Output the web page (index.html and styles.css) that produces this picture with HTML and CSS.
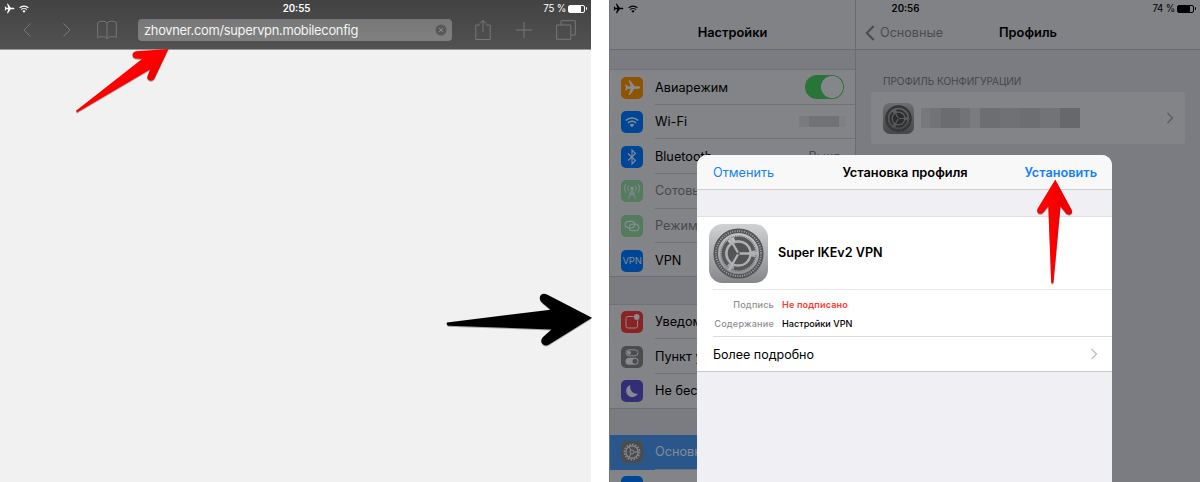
FILE: index.html
```
<!DOCTYPE html>
<html lang="ru">
<head>
<meta charset="utf-8">
<title>Установка профиля</title>
<link rel="stylesheet" href="styles.css">
</head>
<body>
<svg class="defs" width="0" height="0">
  <defs>
    <linearGradient id="metal" x1="0" y1="0" x2="0" y2="1"><stop offset="0" stop-color="#d0d2d4"/><stop offset="1" stop-color="#85878b"/></linearGradient>
    <linearGradient id="red" x1="0" y1="0" x2="1" y2="0"><stop offset=".45" stop-color="#ff0000"/><stop offset=".65" stop-color="#ee0000"/></linearGradient>
    <linearGradient id="redTilt" x1="0" y1="0" x2="1" y2="1"><stop offset=".5" stop-color="#ff0000"/><stop offset=".6" stop-color="#ee0000"/></linearGradient>
    <symbol id="plane" viewBox="0 0 20 20"><path d="M19 10c0-.9-1-1.400-2.500-1.400H12.300L7.200 1.500H5.400L7.800 8.600H4.300L2.600 6.400H1.200L2.200 10 1.200 13.600H2.600L4.300 11.400H7.800L5.400 18.500H7.200L12.300 11.400H16.500C18 11.400 19 10.900 19 10Z" fill="currentColor"/></symbol>
    <symbol id="wifi" viewBox="0 0 20 16"><g fill="none" stroke="currentColor" stroke-width="2.200"><path d="M1.200 5.800a12.500 12.500 0 0 1 17.600 0"/><path d="M4.400 9.200a8 8 0 0 1 11.200 0"/></g><path d="M10 15.500 6.700 12.100a4.700 4.700 0 0 1 6.600 0Z" fill="currentColor"/></symbol>
    <symbol id="gear" viewBox="0 0 60 60">
      <rect width="60" height="60" rx="13.500" fill="url(#metal)"/>
      <circle cx="30" cy="30" r="23.200" fill="none" stroke="#535456" stroke-width="4.600"/>
      <circle cx="30" cy="30" r="22.900" fill="none" stroke="#a9abad" stroke-width="2" stroke-dasharray=".9 1.500"/>
      <circle cx="30" cy="30" r="17.800" fill="none" stroke="#77797b" stroke-width="1.600" stroke-dasharray="1 .9"/>
      <circle cx="30" cy="30" r="15.400" fill="none" stroke="#57585a" stroke-width="3.600" stroke-dasharray="25.250 7" stroke-dashoffset="-3.500"/>
      <circle cx="30" cy="30" r="12" fill="#535456" stroke="#aeb0b2" stroke-width="2"/>
      <path d="M30 30H49.500M30 30 20.250 13.100M30 30 20.250 46.900" stroke="#b0b2b4" stroke-width="2.300"/>
      <circle cx="30" cy="30" r="1.200" fill="#4f5052"/>
    </symbol>
    <symbol id="chevron" viewBox="0 0 8 12"><path d="M1.500 1 6.500 6 1.500 11" fill="none" stroke="currentColor" stroke-width="1.300"/></symbol>
  </defs>
</svg>
<main class="stage">
  <section class="browser">
    <header class="browser-bar">
      <div class="status">
        <span class="status-left"><svg class="s-plane"><use href="#plane"/></svg><svg class="s-wifi"><use href="#wifi"/></svg></span>
        <span class="clock">20:55</span>
        <span class="status-right"><span>75 %</span><i class="battery"></i></span>
      </div>
      <div class="tools">
        <svg class="back" width="10" height="16" viewBox="0 0 10 16"><path d="M8.500 1.500 2 8l6.500 6.500"/></svg>
        <svg class="fwd" width="10" height="16" viewBox="0 0 10 16"><path d="M1.500 1.500 8 8l-6.500 6.500"/></svg>
        <svg class="book" width="20" height="20" viewBox="0 0 20 20"><path d="M10 3C8.500.8 2.500.6.700 2.600V17.800C2.500 16.200 8.500 16 10 18.600 11.500 16 17.500 16.200 19.300 17.800V2.600C17.500.6 11.500.8 10 3ZM10 3V18.600"/></svg>
        <div class="address"><span>zhovner.com/supervpn.mobileconfig</span><svg width="12" height="12" viewBox="0 0 12 12"><circle cx="6" cy="6" r="5.500" fill="#595959"/><path d="m3.900 3.900 4.200 4.200m0-4.200L3.900 8.100" stroke="#898989"/></svg></div>
        <svg class="share" width="16" height="22" viewBox="0 0 16 22"><path d="M5 6H.8V20.500H15.200V6H11M8 13V1.500M4.800 4.500 8 1.300 11.200 4.500"/></svg>
        <svg class="plus" width="16" height="16" viewBox="0 0 16 16"><path d="M8 0V16M0 8H16"/></svg>
        <svg class="tabs" width="20" height="20" viewBox="0 0 20 20"><path d="M.6 5H14.800V19.300H.6ZM5 5V.7H19.300V15H14.800"/></svg>
      </div>
    </header>
  </section>

  <section class="tablet">
    <div class="status dark">
      <span class="status-left"><svg class="s-plane"><use href="#plane"/></svg><svg class="s-wifi"><use href="#wifi"/></svg></span>
      <span class="clock">20:56</span>
      <span class="status-right"><span>74 %</span><i class="battery"></i></span>
    </div>
    <aside class="sidebar">
      <header class="nav"><h2>Настройки</h2></header>
      <ul class="group first">
        <li><span class="ico orange"><svg width="17" height="17"><use href="#plane"/></svg></span><div><b>Авиарежим</b><i class="switch"></i></div></li>
        <li><span class="ico blue"><svg width="14" height="12"><use href="#wifi"/></svg></span><div><b>Wi-Fi</b><i class="blurred"><i></i><i></i><i></i></i></div></li>
        <li><span class="ico blue"><svg width="12" height="16" viewBox="0 0 12 16"><path d="m2 4.500 7.500 7L6 15V1l3.500 3.500-7.500 7" fill="none" stroke="currentColor" stroke-width="1.100"/></svg></span><div><b>Bluetooth</b><em>Выкл.</em></div></li>
        <li class="off"><span class="ico green"><svg width="18" height="18" viewBox="0 0 18 18" fill="none" stroke="currentColor"><path d="M5.500 16.500 9 7l3.500 9.500M6.500 13.500l5-3M11.500 13.500l-5-3M5.800 3.700a4 4 0 0 0 0 5.200M12.200 3.700a4 4 0 0 1 0 5.200M3.200 1.800a7 7 0 0 0 0 9M14.800 1.800a7 7 0 0 1 0 9"/><circle cx="9" cy="6.300" r="1.200" fill="currentColor"/></svg></span><div><b>Сотовые</b></div></li>
        <li class="off"><span class="ico green"><svg width="16" height="12" viewBox="0 0 16 12" fill="none" stroke="currentColor" stroke-width="1.200"><rect x="1.200" y="1.300" width="9.500" height="6.500" rx="3.250"/><rect x="5.300" y="4.200" width="9.500" height="6.500" rx="3.250"/></svg></span><div><b>Режим</b></div></li>
        <li><span class="ico blue vpn">VPN</span><div><b>VPN</b></div></li>
      </ul>
      <ul class="group second">
        <li><span class="ico red"><svg width="18" height="18" viewBox="0 0 18 18"><path d="M10.500 3.500H5A2 2 0 0 0 3 5.500V13a2 2 0 0 0 2 2h7.500a2 2 0 0 0 2-2V7.500" fill="none" stroke="currentColor"/><circle cx="13.700" cy="4" r="2.900" fill="currentColor"/></svg></span><div><b>Уведом</b></div></li>
        <li><span class="ico gray"><svg width="14" height="16" viewBox="0 0 14 16"><rect x="1" y=".8" width="12" height="6" rx="3" fill="none" stroke="currentColor"/><circle cx="4" cy="3.800" r="2" fill="currentColor"/><rect x=".5" y="8.800" width="13" height="7" rx="3.500" fill="currentColor"/><circle cx="10" cy="12.300" r="2.500" fill="#4c4c4f"/></svg></span><div><b>Пункт у</b></div></li>
        <li><span class="ico purple"><svg width="14" height="14" viewBox="0 0 14 14"><path d="M5.500 1A6.200 6.200 0 1 0 13 9.500 6.500 6.500 0 0 1 5.500 1Z" fill="currentColor"/></svg></span><div><b>Не бес</b></div></li>
      </ul>
      <ul class="group third">
        <li class="selected"><span class="ico gray"><svg width="18" height="18" viewBox="0 0 18 18" fill="none" stroke="currentColor"><circle cx="9" cy="9" r="7.600" stroke-width="1.600" stroke-dasharray="1.500 1.480"/><circle cx="9" cy="9" r="6.200" stroke-width="1.200"/><circle cx="9" cy="9" r="2"/><path d="M11 9h4M8 7.300 6 3.800M8 10.700 6 14.200"/></svg></span><div><b>Основн</b></div></li>
        <li><span class="ico blue"></span><div></div></li>
      </ul>
    </aside>
    <section class="detail">
      <header class="nav">
        <a class="nav-back"><svg width="10" height="16" viewBox="0 0 10 16"><path d="M8.700 1 1.800 8l6.900 7" fill="none" stroke="#4a4b4e" stroke-width="2"/></svg>Основные</a>
        <h2>Профиль</h2>
      </header>
      <p class="caption">ПРОФИЛЬ КОНФИГУРАЦИИ</p>
      <div class="profile"><svg class="mini"><use href="#gear"/></svg><span class="mosaic"></span><svg class="chev" width="8" height="12"><use href="#chevron"/></svg></div>
    </section>

    <section class="dialog">
      <header class="dialog-bar"><a>Отменить</a><h2>Установка профиля</h2><a class="install">Установить</a></header>
      <div class="sheet">
        <div class="app"><svg class="app-icon"><use href="#gear"/></svg><h3>Super IKEv2 VPN</h3></div>
        <dl class="facts"><dt>Подпись</dt><dd class="bad">Не подписано</dd><dt>Содержание</dt><dd>Настройки VPN</dd></dl>
        <div class="more"><span>Более подробно</span><svg width="8" height="12"><use href="#chevron"/></svg></div>
      </div>
    </section>
  </section>

  <svg class="arrows" width="1200" height="482" viewBox="0 0 1200 482">
    <path d="M76 110.800 142 59 135.500 58.600C131.500 58 131.500 51.700 136 51.300L168.500 49 154.500 78.500C152 83 146 80 147.500 76L150 69.500 77 112.500Z" fill="url(#redTilt)"/>
    <path d="M1055.300 179.500 1071.500 209.500C1074 214 1068.500 216.500 1065.700 213L1060.500 206.500 1053.500 282.500Q1052.300 284.500 1051.200 282.500L1048.300 206.500 1043.800 212C1040.500 216 1035.500 213 1037.700 208.500Z" fill="url(#red)"/>
    <path d="M447 322.500 550.500 309.700 542.500 303C537 298.500 540.500 291.500 547 294.500L592 317.800 549 344.500C543.500 348 538.500 341.500 543 337L551.500 329.500 448 325.800Q446 324 447 322.500Z" fill="#000"/>
  </svg>
</main>
</body>
</html>
```
FILE: styles.css
```
* { box-sizing: border-box; }
body { margin: 0; background: #fff; font-family: Inter, "Liberation Sans", sans-serif; color: #000; }
h2, h3, p, ul, dl, dd { margin: 0; padding: 0; }
ul { list-style: none; }
i, em { font-style: normal; }
.defs { position: absolute; }
.stage { position: relative; display: flex; justify-content: space-between; width: 1200px; height: 482px; overflow: hidden; }

/* Status bar */
.status { display: grid; grid-template-columns: 1fr auto 1fr; height: 16px; padding: 1px 4px 0; align-items: center; font-size: 9.700px; line-height: 15px; color: #fff; }
.status-left { display: flex; align-items: center; gap: 4px; }
.s-plane { width: 11px; height: 11px; }
.s-wifi { width: 10px; height: 8px; }
.clock { padding-left: 2px; font-size: 9.700px; font-weight: 600; }
.status-right { display: flex; justify-content: flex-end; align-items: center; gap: 2px; letter-spacing: -.2px; }
.battery { position: relative; width: 17px; height: 8px; margin-right: 2px; border: 1px solid currentColor; border-radius: 2px; background: linear-gradient(currentColor, currentColor) left / 12px no-repeat; }
.battery::after { content: ""; position: absolute; right: -3px; top: 1.500px; width: 1.500px; height: 3px; background: currentColor; border-radius: 0 1px 1px 0; }

/* Browser */
.browser { width: 591px; background: #f1f1f1; }
.browser-bar { height: 50px; background: linear-gradient(#424242, #525252); border-bottom: 1px solid #999; }
.tools { display: flex; align-items: center; height: 28px; padding: 0 15px 0 22px; }
.tools > svg { flex: none; fill: none; stroke: #777; stroke-width: 1; }
.fwd { margin-left: 30px; }
.book { margin-left: 25px; }
.address { display: flex; align-items: center; justify-content: space-between; width: 314px; height: 22px; margin-left: 21px; padding: 0 5px 0 6px; border-radius: 4px; background: linear-gradient(#777, #808080); color: #f4f4f4; font-size: 12.900px; letter-spacing: -.3px; }
.share { margin-left: 23px; }
.plus { margin-left: 25px; }
.tabs { margin-left: 24px; }

/* Settings, dimmed behind the dialog */
.tablet { position: relative; display: flex; width: 591px; background: #7b7c81; overflow: hidden; }
.dark { position: absolute; inset: 0 0 auto 0; color: #000; z-index: 1; }
.sidebar { width: 247px; flex: none; border-left: 1px solid #747579; border-right: 1px solid #6b6c70; }
.detail { flex: 1; }
.nav { position: relative; display: flex; align-items: center; justify-content: center; height: 50px; padding-top: 15px; background: #818286; border-bottom: 1px solid #68696d; }
.nav h2 { font-size: 12.800px; font-weight: 600; }
.nav-back { position: absolute; left: 9px; top: 16px; height: 33px; display: flex; align-items: center; gap: 5px; font-size: 12.600px; color: #4a4b4e; }
.group { background: #838488; border-top: 1px solid #727378; border-bottom: 1px solid #6e6f74; }
.group li { display: flex; align-items: center; height: 34.600px; padding-left: 11px; gap: 12px; }
.group li > div { display: flex; align-items: center; justify-content: space-between; flex: 1; height: 100%; padding-right: 11px; border-bottom: 1px solid #727377; white-space: nowrap; }
.group li:last-child > div { border: 0; }
.group b { font-size: 12.700px; font-weight: 400; }
.group em { font-size: 12.700px; color: #48494c; }
.first { margin-top: 19px; height: 208px; padding-top: .3px; }
.second { margin-top: 27px; height: 105px; }
.second li { height: 34.400px; }
.third { margin-top: 26px; border-top: 0; }
.off b { color: #48494c; }
.ico { display: flex; flex: none; align-items: center; justify-content: center; width: 22px; height: 22px; border-radius: 5px; color: #888b91; }
.orange { background: #8f5400; }
.blue { background: #004697; }
.green { background: #527c5d; }
.red { background: #8b2223; }
.gray { background: #4c4c4f; }
.purple { background: #322f76; }
.vpn { font-size: 9.500px; letter-spacing: -.2px; }
.switch { width: 39px; height: 24px; border-radius: 12px; background: radial-gradient(circle at 27px 12px, #85868a 10.700px, transparent 11.300px), #287537; }
.blurred { display: flex; height: 11px; margin-right: -2px; }
.blurred i { width: 10px; background: #797a7e; }
.blurred i + i { width: 30px; background: #717276; }
.blurred i + i + i { width: 7px; background: #7f8084; }
.selected { background: #2a578b; }
.selected b { color: #858b94; }
.caption { margin: 25px 0 0 27px; font-size: 10px; line-height: 13px; color: #444549; }
.profile { display: flex; align-items: center; height: 52px; margin: 4px 15px 0 15px; padding: 0 11px 0 12px; border-radius: 3px; background: #838488; }
.mini { width: 31px; height: 31px; filter: brightness(.52); }
.mosaic { width: 159px; height: 20px; margin-left: 7px; background: linear-gradient(90deg, #77787b 0 9px, #727376 9px 20px, #6b6c6f 20px 39px, #727376 39px 49px, #7a7b7e 49px 59px, #6d6e71 59px 79px, #707174 79px 99px, #6d6e71 99px 119px, #727376 119px 139px, #67686b 139px); }
.chev { margin-left: auto; color: #5b5c60; }

/* Install dialog */
.dialog { position: absolute; z-index: 2; left: 88px; top: 155px; width: 415px; height: 340px; border-radius: 10px 10px 0 0; background: #efeff4; overflow: hidden; }
.dialog-bar { display: grid; grid-template-columns: 1fr auto 1fr; align-items: center; height: 35px; padding: 0 15px 0 16px; background: #f8f8f8; border-bottom: 1px solid #cfcfd2; font-size: 12.700px; }
.dialog-bar a { color: #157efb; }
.dialog-bar h2 { font-size: 12.800px; font-weight: 600; }
.dialog-bar .install { font-weight: 600; text-align: right; }
.sheet { margin-top: 26px; background: #fff; border-top: 1px solid #dedee2; border-bottom: 1px solid #c8c7cc; }
.app { display: flex; align-items: center; height: 72px; margin-left: 12px; gap: 10px; }
.app-icon { width: 59px; height: 59px; }
.app h3 { font-size: 12.600px; font-weight: 600; line-height: 15px; padding-bottom: 1px; }
.facts { display: grid; grid-template-columns: 61px 1fr; grid-auto-rows: 19px; column-gap: 8px; height: 48px; margin-left: 16px; padding-top: 5px; border-top: 1px solid #e6e6e8; border-bottom: 1px solid #dcdcde; font-size: 9.100px; line-height: 19px; font-weight: 500; }
.facts dt { text-align: right; color: #8e8e93; white-space: nowrap; letter-spacing: .2px; }
.facts .bad { color: #ff3b30; font-weight: 600; letter-spacing: .15px; }
.more { display: flex; align-items: center; justify-content: space-between; height: 34px; padding: 0 14px 0 16px; font-size: 12.500px; }
.more svg { color: #bcbcc1; }

/* Pointers laid over both screens */
.arrows { position: absolute; inset: 0; z-index: 3; filter: drop-shadow(0 1px .5px rgba(0, 0, 0, .3)); }
```
